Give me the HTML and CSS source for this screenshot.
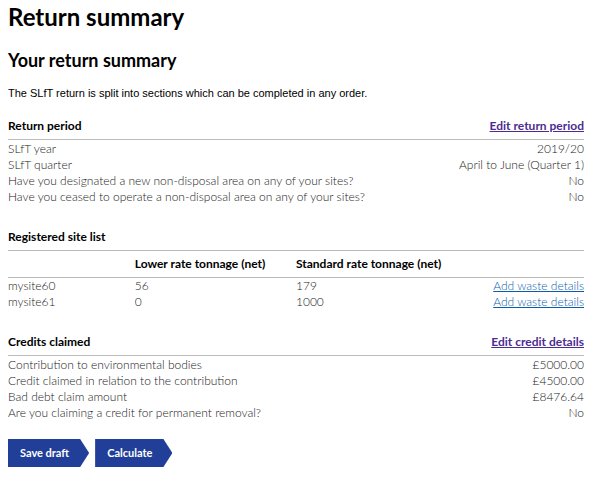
FILE: index.html
```html
<!DOCTYPE html>
<html lang="en">

	<head>
		<meta charset="UTF-8">
		<title>Return summary</title>
		<link rel="stylesheet" href="styles.css">
	</head>

	<body>
		<h1>Return summary</h1>
		<h2>Your return summary</h2>
		<p class="intro">The SLfT return is split into sections which can be completed in any order.</p>

		<form action="#" method="post">
			<section class="section">
				<div class="section-head">
					<h3>Return period</h3>
					<a class="edit-link" href="#period">Edit return period</a>
				</div>
				<table class="summary">
					<tr><th scope="row">SLfT year</th><td>2019/20</td></tr>
					<tr><th scope="row">SLfT quarter</th><td>April to June (Quarter 1)</td></tr>
					<tr><th scope="row">Have you designated a new non-disposal area on any of your sites?</th><td>No</td></tr>
					<tr><th scope="row">Have you ceased to operate a non-disposal area on any of your sites?</th><td>No</td></tr>
				</table>
			</section>

			<section class="section">
				<div class="section-head">
					<h3>Registered site list</h3>
				</div>
				<table class="sites">
					<thead>
						<tr>
							<td class="col-site"></td>
							<th class="col-lower" scope="col">Lower rate tonnage (net)</th>
							<th class="col-standard" scope="col">Standard rate tonnage (net)</th>
							<td class="col-action"></td>
						</tr>
					</thead>
					<tbody>
						<tr>
							<td>mysite60</td>
							<td>56</td>
							<td>179</td>
							<td class="action"><a href="#site60">Add waste details</a></td>
						</tr>
						<tr>
							<td>mysite61</td>
							<td>0</td>
							<td>1000</td>
							<td class="action"><a href="#site61">Add waste details</a></td>
						</tr>
					</tbody>
				</table>
			</section>

			<section class="section">
				<div class="section-head">
					<h3>Credits claimed</h3>
					<a class="edit-link" href="#credits">Edit credit details</a>
				</div>
				<table class="summary">
					<tr><th scope="row">Contribution to environmental bodies</th><td>£5000.00</td></tr>
					<tr><th scope="row">Credit claimed in relation to the contribution</th><td>£4500.00</td></tr>
					<tr><th scope="row">Bad debt claim amount</th><td>£8476.64</td></tr>
					<tr><th scope="row">Are you claiming a credit for permanent removal?</th><td>No</td></tr>
				</table>
			</section>

			<div class="buttons">
				<button class="btn" type="submit">Save draft</button>
				<button class="btn" type="button">Calculate</button>
			</div>
		</form>
	</body>

</html>
```
FILE: styles.css
```css
* {
	box-sizing: border-box;
	margin: 0;
	padding: 0;
}

body {
	padding: 3px 16px 8px 8px;
	background-color: #fff;
	color: #222;
	font-family: Lato, "Open Sans", sans-serif;
	font-size: 12px;
	line-height: 16px;
}

h1,
h2,
h3 {
	color: #000;
	font-weight: 700;
}

h1 {
	margin-bottom: 17px;
	font-size: 24px;
	line-height: 28px;
}

h2 {
	margin-bottom: 12px;
	font-size: 18px;
	line-height: 24px;
}

h3 {
	font-size: 12px;
}

.intro {
	margin-bottom: 16px;
	color: #000;
	font-family: "Liberation Sans", Arial, sans-serif;
	font-size: 11px;
	line-height: 18px;
}

/* sections */
.section + .section {
	margin-top: 24px;
}

.section-head {
	display: flex;
	justify-content: space-between;
	padding-bottom: 5px;
	border-bottom: 1px solid #bbb;
}

.edit-link {
	color: #4c2c92;
	font-weight: 700;
}

table {
	width: 100%;
	border-collapse: collapse;
}

th,
td {
	text-align: left;
	font-weight: 300;
}

.summary {
	margin-top: 1px;
}

.summary td {
	text-align: right;
}

/* site list */
.sites thead tr {
	border-bottom: 1px solid #bbb;
}

.sites thead th {
	padding: 5px 0;
	color: #000;
	font-weight: 700;
}

.col-site {
	width: 22%;
}

.col-lower {
	width: 28%;
}

.sites .action {
	text-align: right;
}

.action a {
	color: #0b5cad;
}

/* buttons */
.buttons {
	display: flex;
	gap: 6px;
	margin-top: 18px;
}

.btn {
	padding: 6px 20px 6px 12px;
	border: 0;
	background-color: #213f99;
	clip-path: polygon(0 0, calc(100% - 9px) 0, 100% 50%, calc(100% - 9px) 100%, 0 100%);
	color: #fff;
	font-family: inherit;
	font-size: 11px;
	font-weight: 700;
	line-height: 16px;
	cursor: pointer;
}
```
